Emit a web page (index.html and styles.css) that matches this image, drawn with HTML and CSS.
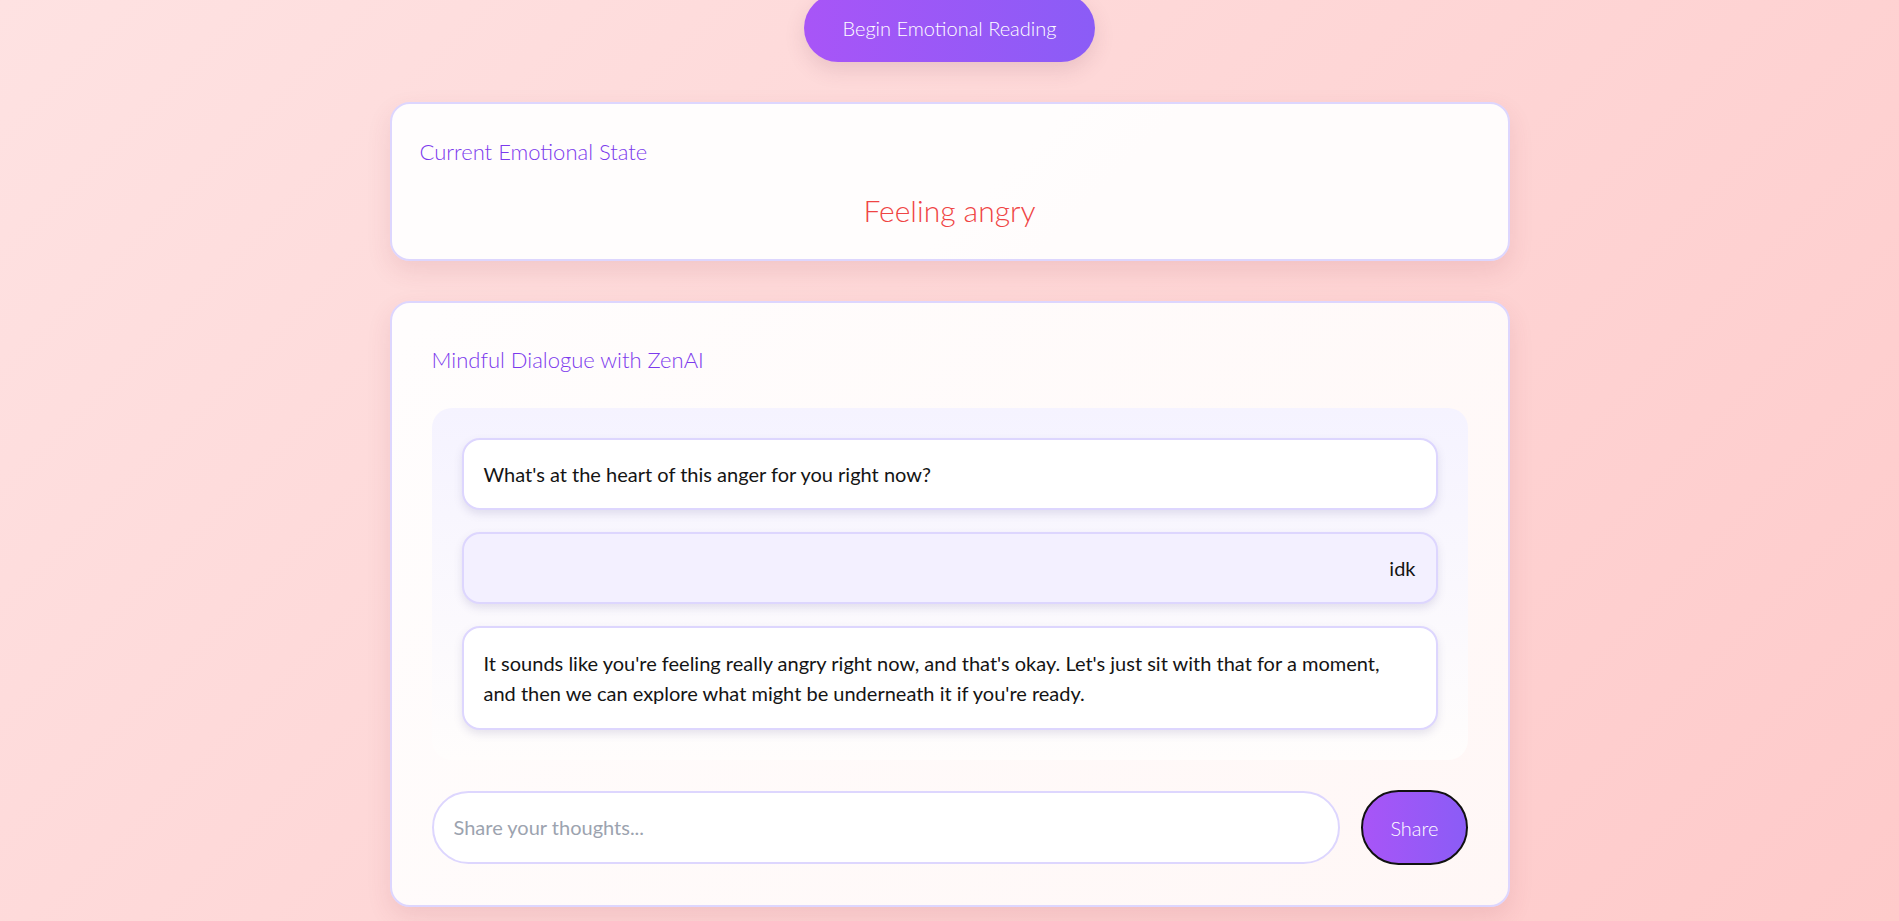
FILE: index.html
```html
<!DOCTYPE html>
<html lang="en">
<head>
    <meta charset="UTF-8">
    <meta name="viewport" content="width=device-width, initial-scale=1.0">
    <title>ZenAI - Emotional Reading</title>
    <link rel="stylesheet" href="styles.css">
</head>
<body>
    <div class="page">
        <div class="top">
            <button class="begin-btn">Begin Emotional Reading</button>
        </div>

        <div class="card state-card">
            <h3 class="card-title">Current Emotional State</h3>
            <p class="emotion">Feeling angry</p>
        </div>

        <div class="card chat-card">
            <h3 class="card-title chat-title">Mindful Dialogue with ZenAI</h3>
            <div class="chat-box">
                <div class="msg ai">What's at the heart of this anger for you right now?</div>
                <div class="msg user">idk</div>
                <div class="msg ai">It sounds like you're feeling really angry right now, and that's okay. Let's just sit with that for a moment, and then we can explore what might be underneath it if you're ready.</div>
            </div>
            <form class="chat-form" onsubmit="return false;">
                <input type="text" class="chat-input" placeholder="Share your thoughts...">
                <button type="submit" class="share-btn">Share</button>
            </form>
        </div>
    </div>
</body>
</html>
```

FILE: styles.css
```css
*{
    margin: 0;
    padding: 0;
    box-sizing: border-box;
}

body{
    font-family: Lato, "Open Sans", sans-serif;
    min-height: 100vh;
    background: linear-gradient(135deg, #fee2e2 0%, #fecaca 100%);
    color: #141414;
}

.page{
    max-width: 1120px;
    margin: 0 auto;
}

.top{
    display: flex;
    justify-content: center;
    margin-top: -6px;
    margin-bottom: 40px;
}
.begin-btn{
    font-family: inherit;
    font-size: 20px;
    font-weight: 300;
    line-height: 28px;
    color: white;
    padding: 20px 39px;
    border: none;
    border-radius: 9999px;
    background: linear-gradient(90deg, #a855f7, #8b5cf6);
    box-shadow: 0 8px 20px rgba(120, 60, 90, 0.15);
    cursor: pointer;
}

.card{
    background: rgba(255, 255, 255, 0.93);
    border: 2px solid #ddd6fe;
    border-radius: 20px;
    box-shadow: 0 10px 25px rgba(150, 60, 70, 0.12);
}
.state-card{
    padding: 32px 28px 31px;
    margin-bottom: 40px;
}
.card-title{
    font-size: 22px;
    font-weight: 300;
    line-height: 32px;
    color: #7c3aed;
    margin-bottom: 24px;
}
.emotion{
    text-align: center;
    font-size: 30px;
    font-weight: 300;
    line-height: 36px;
    color: #ef4444;
}

.chat-card{
    padding: 40px;
    background: linear-gradient(135deg, rgba(255,255,255,0.95), rgba(255,250,249,0.93));
}
.chat-title{
    margin-top: 1px;
    margin-bottom: 32px;
}
.chat-box{
    padding: 30px;
    border-radius: 20px;
    background: linear-gradient(180deg, #f5f3ff 0%, #fffdfc 100%);
}
.msg{
    font-size: 20px;
    line-height: 28px;
    padding: 20px;
    border: 2px solid #ddd6fe;
    border-radius: 18px;
    background-color: white;
    box-shadow: 0 4px 8px rgba(90, 80, 140, 0.15);
    margin-bottom: 22px;
}
.msg:last-child{
    margin-bottom: 0;
    line-height: 30px;
}
.msg.user{
    text-align: right;
    background-color: #f3f0ff;
}

.chat-form{
    display: flex;
    align-items: center;
    gap: 21px;
    margin-top: 30px;
}
.chat-input{
    flex: 1;
    font-family: inherit;
    font-size: 20px;
    line-height: 28px;
    padding: 20px;
    padding-bottom: 21px;
    border: 2px solid #ddd6fe;
    border-radius: 9999px;
    background: white;
    outline: none;
}
.chat-input::placeholder{
    color: #9ca3af;
}
.share-btn{
    font-family: inherit;
    font-size: 20px;
    font-weight: 300;
    line-height: 28px;
    color: white;
    padding: 22px 27px 21px;
    border: 2px solid #111;
    border-radius: 9999px;
    background: linear-gradient(90deg, #a855f7, #8b5cf6);
    cursor: pointer;
}
```
